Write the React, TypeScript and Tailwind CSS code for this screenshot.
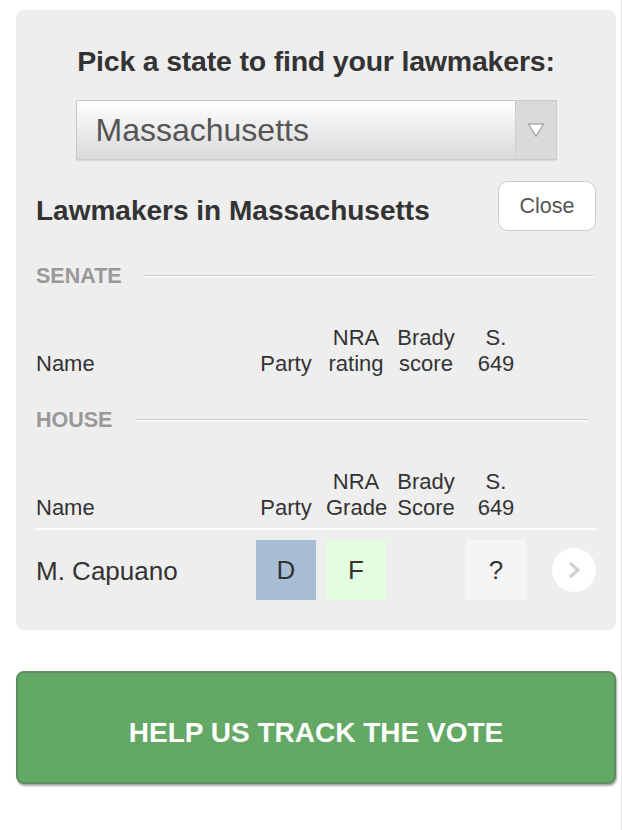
const ColHead = ({ top, bottom }: { top: string; bottom: string }) => (
  <div className="w-[60px] text-center whitespace-nowrap">
    <div>{top}</div>
    <div>{bottom}</div>
  </div>
)

const SectionTitle = ({ label, lineClass }: { label: string; lineClass: string }) => (
  <div className="flex items-center">
    <span className="text-[21.5px] leading-[24px] font-bold text-[#999999]">{label}</span>
    <div className={`flex-1 h-[3px] border-t border-[#cfcfcf] bg-[#f8f8f8] ${lineClass}`} />
  </div>
)

const HeaderRow = ({ cols }: { cols: [string, string][] }) => (
  <div className="flex items-end gap-[10px] text-[22px] leading-[26px] text-[#333333]">
    <div className="flex-1">Name</div>
    {cols.map(([t, b]) => (
      <ColHead key={t + b} top={t} bottom={b} />
    ))}
    <div className="w-[60px]" />
  </div>
)

const App = () => (
  <div className="w-[622px] min-h-[830px] bg-white border-r border-[#e2e2e2] pt-[10px] font-['Liberation_Sans',Arial,sans-serif]">
    <div className="ml-[16px] w-[600px] rounded-[8px] bg-[#eeeeee] px-5 pt-[37px] pb-[30px]">
      <h2 className="text-center text-[28.5px] leading-[28px] font-bold text-[#333333] tracking-[-0.2px]">
        Pick a state to find your lawmakers:
      </h2>

      <div className="mx-auto mt-[25px] flex h-[60px] w-[481px] border border-[#c9c9c9] bg-gradient-to-b from-white to-[#d9d9d9] shadow-[0_1px_1px_rgba(0,0,0,0.08)]">
        <div className="flex flex-1 items-center pl-[19px] text-[32px] text-[#555555]">Massachusetts</div>
        <div className="flex w-[41px] items-center justify-center border-l border-[#cdcdcd] bg-[#dadada]">
          <svg width="18" height="16" viewBox="0 0 18 16">
            <polygon points="1.5,2 16.5,2 9,14.5" fill="#ffffff" stroke="#8a8a8a" strokeWidth="1" />
          </svg>
        </div>
      </div>

      <div className="mt-[21px] flex h-[50px] items-center justify-between">
        <h3 className="mt-[10px] text-[28px] font-bold text-[#333333]">Lawmakers in Massachusetts</h3>
        <button className="h-[50px] w-[98px] rounded-[10px] border border-[#cccccc] bg-white text-[21.5px] text-[#555555]">
          Close
        </button>
      </div>

      <div className="mt-[33px]">
        <SectionTitle label="SENATE" lineClass="ml-[22px] mr-[2px]" />
      </div>

      <div className="mt-[37px]">
        <HeaderRow
          cols={[
            ["", "Party"],
            ["NRA", "rating"],
            ["Brady", "score"],
            ["S.", "649"],
          ]}
        />
      </div>

      <div className="mt-[31px]">
        <SectionTitle label="HOUSE" lineClass="ml-[23px] mr-[8px]" />
      </div>

      <div className="mt-[37px]">
        <HeaderRow
          cols={[
            ["", "Party"],
            ["NRA", "Grade"],
            ["Brady", "Score"],
            ["S.", "649"],
          ]}
        />
      </div>

      <div className="mt-[7px] h-[2px] bg-white" />

      <div className="mt-[10px] flex h-[60px] items-center gap-[10px] text-[#333333]">
        <div className="flex-1 pt-[3px] text-[26px]">M. Capuano</div>
        <div className="flex h-[60px] w-[60px] items-center justify-center bg-[#a8bed6] text-[26px]">D</div>
        <div className="flex h-[60px] w-[60px] items-center justify-center bg-[#e4fde0] text-[26px]">F</div>
        <div className="h-[60px] w-[60px]" />
        <div className="flex h-[60px] w-[60px] items-center justify-center bg-[#f5f5f5] text-[26px]">?</div>
        <div className="flex w-[60px] justify-end">
          <div className="flex h-[44px] w-[44px] items-center justify-center rounded-full bg-white">
            <svg width="16" height="20" viewBox="0 0 16 20">
              <polyline points="4,3 12,10 4,17" fill="none" stroke="#d0d0d0" strokeWidth="3" />
            </svg>
          </div>
        </div>
      </div>
    </div>

    <button className="ml-[16px] mt-[41px] flex h-[113px] w-[600px] items-center justify-center rounded-[8px] border-2 border-[#5f8c60] bg-[#64a866] pt-[10px] text-[28px] font-bold text-white shadow-[1px_2px_2px_rgba(0,0,0,0.35)]">
      HELP US TRACK THE VOTE
    </button>
  </div>
)

export default App
